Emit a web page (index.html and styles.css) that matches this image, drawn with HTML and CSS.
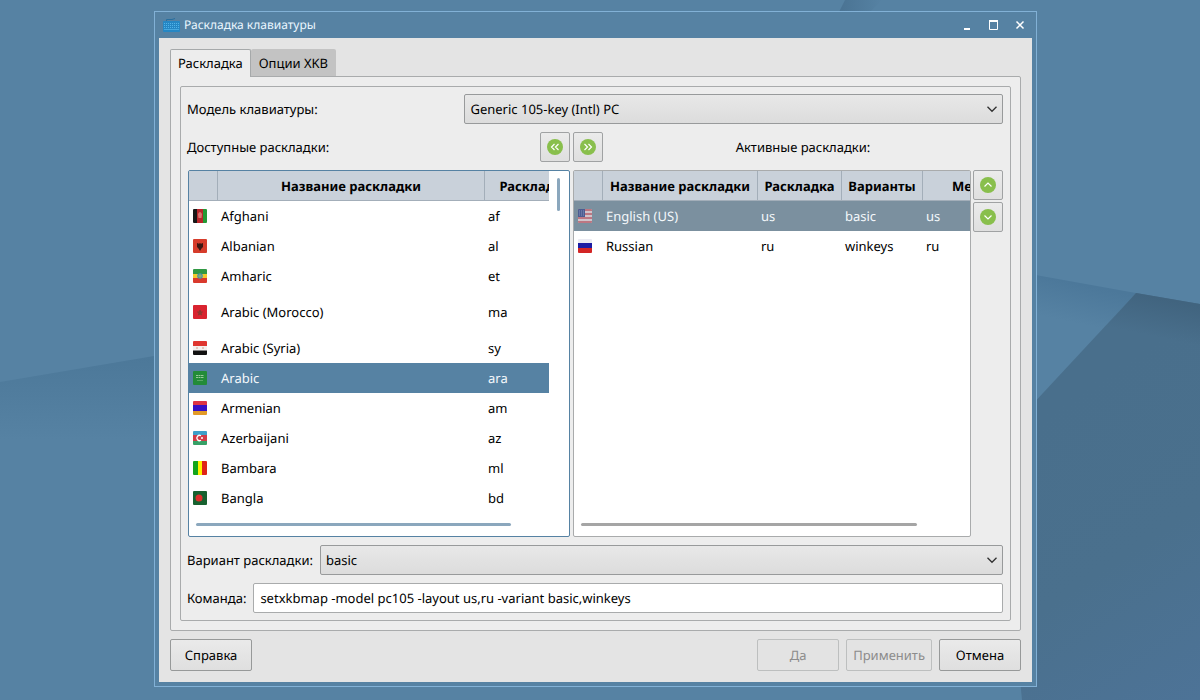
FILE: index.html
```html
<!DOCTYPE html>
<html lang="ru">
<head>
<meta charset="utf-8">
<title>Раскладка клавиатуры</title>
<link rel="stylesheet" href="styles.css">
</head>
<body>
<svg class="wallpaper" viewBox="0 0 1200 700" preserveAspectRatio="none" aria-hidden="true">
  <defs>
    <linearGradient id="shadeLeft" x1="0" y1="0" x2="0" y2="1"><stop offset="0" stop-color="#4c7899"/><stop offset="1" stop-color="#5682a3"/></linearGradient>
    <linearGradient id="shadeRight" gradientUnits="userSpaceOnUse" x1="1060" y1="280" x2="1052" y2="318"><stop offset="0" stop-color="#4c789a"/><stop offset="1" stop-color="#5682a3"/></linearGradient>
    <linearGradient id="facet" gradientUnits="userSpaceOnUse" x1="1020" y1="430" x2="1200" y2="700"><stop offset="0" stop-color="#496f8c"/><stop offset="0.5" stop-color="#4a708d"/><stop offset="1" stop-color="#4d7397"/></linearGradient>
    <linearGradient id="facetTop" gradientUnits="userSpaceOnUse" x1="1160" y1="298" x2="1152" y2="336"><stop offset="0" stop-color="#41647f"/><stop offset="1" stop-color="#41647f" stop-opacity="0"/></linearGradient>
    <linearGradient id="topShade" x1="0" y1="0" x2="1" y2="0"><stop offset="0" stop-color="#4a7393"/><stop offset="1" stop-color="#5682a3"/></linearGradient>
  </defs>
  <rect width="1200" height="700" fill="#5682a3"/>
  <path d="M0 382L154 356V440H0z" fill="url(#shadeLeft)"/>
  <path d="M845 0H882L870 12H839z" fill="url(#topShade)"/>
  <path d="M1030 274L1136 293L1030 408z" fill="url(#shadeRight)"/>
  <path d="M1136 293L1200 304V700H1022L1020 680L1030 407z" fill="url(#facet)"/>
  <path d="M1136 293L1200 304V345L1100 333z" fill="url(#facetTop)"/>
</svg>
<svg class="symbols" aria-hidden="true">
  <symbol id="chevron" viewBox="0 0 12 12"><path d="M1.5 3.8L6 8.3L10.500 3.800" fill="none" stroke="#303030" stroke-width="1.300"/></symbol>
</svg>

<main class="window">
  <header class="titlebar">
    <svg class="app-icon" viewBox="0 0 17 14" aria-hidden="true">
      <path d="M3.500 3.500V1.500H9L12 .5" fill="none" stroke="#286f9f"/>
      <rect x="0" y="3" width="17" height="11" rx="1" fill="#2587c4"/>
      <path d="M1 5.500H16M1 7.500H16M1 9.500H16" stroke="#51b3e8" stroke-dasharray="1 1"/>
      <path d="M1 11.500H16" stroke="#45a8df"/>
    </svg>
    <h1 class="title">Раскладка клавиатуры</h1>
    <div class="controls">
      <button class="control" type="button" aria-label="Свернуть"><svg viewBox="0 0 10 10"><path d="M1 9H7" stroke="#fff" stroke-width="2"/></svg></button>
      <button class="control" type="button" aria-label="Развернуть"><svg viewBox="0 0 10 10"><path d="M.5 1.500H8.500V9.500H.5z" fill="none" stroke="#fff" stroke-width="1"/><path d="M0 1H9" stroke="#fff" stroke-width="2"/></svg></button>
      <button class="control" type="button" aria-label="Закрыть"><svg viewBox="0 0 10 10"><path d="M1.500 1.500L8.500 8.500M8.500 1.500L1.500 8.500" stroke="#fff" stroke-width="1.500"/></svg></button>
    </div>
  </header>

  <div class="content">
    <div class="tabs" role="tablist">
      <button class="tab tab-active" type="button" role="tab" aria-selected="true">Раскладка</button>
      <button class="tab" type="button" role="tab" aria-selected="false">Опции XKB</button>
    </div>
    <section class="panel">
      <div class="group">
        <div class="model-row">
          <label for="model">Модель клавиатуры:</label>
          <div class="combo">
            <select id="model"><option>Generic 105-key (Intl) PC</option></select>
            <svg class="combo-arrow"><use href="#chevron"/></svg>
          </div>
        </div>

        <div class="lists">
          <div class="list-head">
            <span>Доступные раскладки:</span>
            <button class="icon-button" type="button" aria-label="Убрать раскладку"><svg viewBox="0 0 16 16"><circle cx="8" cy="8" r="8" fill="#89bf4c"/><path d="M7.500 5L4.500 8L7.500 11M11.500 5L8.500 8L11.500 11" fill="none" stroke="#fff" stroke-width="1.200"/></svg></button>
          </div>
          <div class="list-head">
            <button class="icon-button" type="button" aria-label="Добавить раскладку"><svg viewBox="0 0 16 16"><circle cx="8" cy="8" r="8" fill="#89bf4c"/><path d="M4.500 5L7.500 8L4.500 11M8.500 5L11.500 8L8.500 11" fill="none" stroke="#fff" stroke-width="1.200"/></svg></button>
            <span class="centered">Активные раскладки:</span>
          </div>

          <div class="view view-focused">
            <div class="viewport">
              <table class="table available">
                <colgroup><col class="c-flag"><col class="c-name-wide"><col class="c-code-wide"></colgroup>
                <thead><tr><th></th><th>Название раскладки</th><th>Раскладка</th></tr></thead>
                <tbody>
                  <tr><td><svg class="flag" viewBox="0 0 14 14"><path fill="#161616" d="M0 0h5v14H0z"/><path fill="#b9262b" d="M4 0h6v14H4z"/><path fill="#249a35" d="M10 0h4v14h-4z"/><path d="M5 5Q7 1 9 5L8.500 9H5.500z" fill="#d9766f"/></svg></td><td>Afghani</td><td>af</td></tr>
                  <tr><td><svg class="flag" viewBox="0 0 14 14"><path fill="#d63c2b" d="M0 0h14v14H0z"/><path fill="#3b1713" d="M4 4l2 .7L7 4l1 .7L10 4v4L8.500 9.500 7 12 5.500 9.500 4 8z"/></svg></td><td>Albanian</td><td>al</td></tr>
                  <tr><td><svg class="flag" viewBox="0 0 14 14"><path fill="#319944" d="M0 0h14v5H0z"/><path fill="#f2c92d" d="M0 5h14v4H0z"/><path fill="#d93a2d" d="M0 9h14v5H0z"/><circle cx="7" cy="7" r="2.800" fill="#458eae"/><path d="M7 4.800v4.400M5 7h4" stroke="#9bb65b"/></svg></td><td>Amharic</td><td>et</td></tr>
                  <tr class="tall"><td><svg class="flag" viewBox="0 0 14 14"><path fill="#d9232f" d="M0 0h14v14H0z"/><path d="M7 5l1.500 5-4-3h5l-4 3z" fill="none" stroke="#8b3930"/></svg></td><td>Arabic (Morocco)</td><td>ma</td></tr>
                  <tr><td><svg class="flag" viewBox="0 0 14 14"><path fill="#df352f" d="M0 0h14v5H0z"/><path fill="#f3f0ee" d="M0 5h14v4.500H0z"/><path fill="#111" d="M0 9.500h14V14H0z"/><path d="M3 7h2M9 7h2" stroke="#d99a87"/></svg></td><td>Arabic (Syria)</td><td>sy</td></tr>
                  <tr class="selected"><td><svg class="flag" viewBox="0 0 14 14"><path fill="#238b38" d="M0 0h14v14H0z"/><path d="M3 4.500h8M3 6.500h8" stroke="#99c99a" stroke-dasharray="2 .5"/><path d="M4 9.500h6" stroke="#5aa765"/></svg></td><td>Arabic</td><td>ara</td></tr>
                  <tr><td><svg class="flag" viewBox="0 0 14 14"><path fill="#dd3343" d="M0 0h14v5H0z"/><path fill="#3510c4" d="M0 4h14v6H0z"/><path fill="#e29a27" d="M0 10h14v4H0z"/></svg></td><td>Armenian</td><td>am</td></tr>
                  <tr><td><svg class="flag" viewBox="0 0 14 14"><path fill="#3d9fc9" d="M0 0h14v5H0z"/><path fill="#d13c48" d="M0 4h14v6H0z"/><path fill="#36a066" d="M0 10h14v4H0z"/><path d="M8 4.700a2.700 2.700 0 1 0 0 4.600" fill="none" stroke="#fff" stroke-width="1.300"/><circle cx="9" cy="7" r="1" fill="#fff"/></svg></td><td>Azerbaijani</td><td>az</td></tr>
                  <tr><td><svg class="flag" viewBox="0 0 14 14"><path fill="#14a51b" d="M0 0h5v14H0z"/><path fill="#fff100" d="M5 0h4v14H5z"/><path fill="#df2418" d="M9 0h5v14H9z"/></svg></td><td>Bambara</td><td>ml</td></tr>
                  <tr><td><svg class="flag" viewBox="0 0 14 14"><path fill="#17612f" d="M0 0h14v14H0z"/><circle cx="6" cy="7" r="3.500" fill="#df2d2b"/></svg></td><td>Bangla</td><td>bd</td></tr>
                </tbody>
              </table>
            </div>
            <div class="vtrack"><div class="vthumb"></div></div>
            <div class="htrack"><div class="hthumb"></div></div>
          </div>

          <div class="active-list">
            <div class="view">
              <div class="viewport viewport-wide">
                <table class="table active">
                  <colgroup><col class="c-flag"><col class="c-name"><col class="c-code"><col class="c-variant"><col class="c-label"></colgroup>
                  <thead><tr><th></th><th>Название раскладки</th><th>Раскладка</th><th>Варианты</th><th>Метка</th></tr></thead>
                  <tbody>
                    <tr class="selected"><td><svg class="flag" viewBox="0 0 14 14"><path fill="#d1c4cb" d="M0 0h14v14H0z"/><path d="M0 1h14M0 5h14M0 9h14M0 13h14" stroke="#b75e6b" stroke-width="1.600"/><path fill="#4c5d92" d="M0 0h7v8H0z"/><path d="M1 2h5M1 4h5M1 6h5" stroke="#8492b8" stroke-dasharray="1 1"/></svg></td><td>English (US)</td><td>us</td><td>basic</td><td>us</td></tr>
                    <tr><td><svg class="flag" viewBox="0 0 14 14"><path fill="#ebebf3" d="M0 0h14v5H0z"/><path fill="#1c1ca4" d="M0 4h14v6H0z"/><path fill="#d32525" d="M0 9h14v5H0z"/></svg></td><td>Russian</td><td>ru</td><td>winkeys</td><td>ru</td></tr>
                  </tbody>
                </table>
              </div>
              <div class="htrack"><div class="hthumb hthumb-wide"></div></div>
            </div>
            <div class="order">
              <button class="icon-button" type="button" aria-label="Выше"><svg viewBox="0 0 16 16"><circle cx="8" cy="8" r="8" fill="#89bf4c"/><path d="M4.500 9.500L8 6L11.500 9.500" fill="none" stroke="#fff" stroke-width="1.200"/></svg></button>
              <button class="icon-button" type="button" aria-label="Ниже"><svg viewBox="0 0 16 16"><circle cx="8" cy="8" r="8" fill="#89bf4c"/><path d="M4.500 6.500L8 10L11.500 6.500" fill="none" stroke="#fff" stroke-width="1.200"/></svg></button>
            </div>
          </div>
        </div>

        <div class="field">
          <label for="variant">Вариант раскладки:</label>
          <div class="combo">
            <select id="variant"><option>basic</option></select>
            <svg class="combo-arrow"><use href="#chevron"/></svg>
          </div>
        </div>
        <div class="field">
          <label for="command">Команда:</label>
          <input id="command" class="command" type="text" value="setxkbmap -model pc105 -layout us,ru -variant basic,winkeys">
        </div>
      </div>
    </section>
    <footer class="actions">
      <button class="button button-help" type="button">Справка</button>
      <button class="button" type="button" disabled>Да</button>
      <button class="button" type="button" disabled>Применить</button>
      <button class="button" type="button">Отмена</button>
    </footer>
  </div>
</main>
</body>
</html>
```
FILE: styles.css
```css
* { box-sizing: border-box; }

body {
  display: flex;
  min-height: 100vh;
  margin: 0;
  padding: 11px 163px 13px 154px;
  background: #5682a3;
  color: #000;
  font: 13px/18px "Noto Sans", sans-serif;
  text-rendering: geometricPrecision;
}

button, select, input { font: inherit; color: inherit; margin: 0; text-rendering: inherit; }

.wallpaper { position: fixed; inset: 0; z-index: -1; width: 100%; height: 100%; }
.symbols { position: absolute; width: 0; height: 0; }

.window {
  display: flex;
  flex: 1;
  flex-direction: column;
  min-width: 0;
  padding: 0 4px 4px;
  border: 1px solid #82b1d6;
  background: #5682a3;
}

.titlebar { display: flex; align-items: center; gap: 4px; height: 26px; padding: 0 7px 0 4px; color: #eaf6ff; }
.app-icon { width: 17px; height: 14px; }
.title { flex: 1; margin: 0; font-size: 12px; font-weight: 400; }
.controls { display: flex; gap: 16px; }
.control { display: flex; width: 10px; height: 10px; padding: 0; border: 0; background: none; }
.control svg { width: 10px; height: 10px; }

.content { display: flex; flex: 1; flex-direction: column; padding: 11px 11px 11px 11px; background: #e4e4e4; }

.tabs { display: flex; align-items: flex-end; }
.tab { height: 27px; padding: 0 8px; border: 0; border-radius: 2px 2px 0 0; background: #c3c3c3; }
.tab-active {
  height: 28px;
  margin-bottom: -1px;
  padding: 0 7px 1px;
  border: 1px solid #a6a9aa;
  border-bottom: 0;
  background: #ededed;
  z-index: 1;
}

.panel { display: flex; flex: 1; padding: 9px; border: 1px solid #a9abac; border-radius: 0 2px 2px 2px; background: #ededed; }
.group {
  display: flex;
  flex: 1;
  flex-direction: column;
  gap: 8px;
  min-width: 0;
  padding: 7px 7px 7px 6px;
  border: 1px solid #a9abac;
  border-radius: 2px;
}

.model-row { display: grid; grid-template-columns: 34fr 66fr; align-items: center; }
.field { display: flex; align-items: center; gap: 7px; }
.field .combo { flex: 1; }

.combo { display: grid; align-items: center; }
.combo select, .combo-arrow { grid-area: 1 / 1; }
.combo select {
  width: 100%;
  height: 30px;
  padding: 0 24px 0 5px;
  border: 1px solid #989a9b;
  border-radius: 2px;
  appearance: none;
  background: linear-gradient(#e8e8e8, #dcdcdc);
}
.combo-arrow { justify-self: end; width: 12px; height: 12px; margin-right: 5px; pointer-events: none; }

.command { flex: 1; min-width: 0; height: 30px; padding: 0 6px; border: 1px solid #a9abac; border-radius: 2px; background: #fff; }

.lists { display: grid; flex: 1; grid-template-columns: 383fr 430fr; grid-template-rows: auto 1fr; gap: 8px 3px; }
.list-head { display: flex; align-items: center; justify-content: space-between; }
.centered { flex: 1; text-align: center; }

.icon-button {
  display: flex;
  align-items: center;
  justify-content: center;
  width: 30px;
  height: 30px;
  padding: 0;
  border: 1px solid #a0a2a3;
  border-radius: 2px;
  background: linear-gradient(#ebebeb, #dfdfdf);
}
.icon-button svg { width: 16px; height: 16px; }

.view {
  display: grid;
  flex: 1;
  grid-template-columns: minmax(0, 1fr) 20px;
  grid-template-rows: minmax(0, 1fr) 23px;
  min-width: 0;
  border: 1px solid #a9abac;
  border-radius: 2px;
  background: #fff;
}
.view-focused { margin-left: 1px; border-color: #5682a3; }
.viewport { overflow: hidden; }
.viewport-wide { grid-column: 1 / -1; }
.vtrack { padding: 7px 9px 0 8px; }
.vthumb { height: 33px; border-radius: 2px; background: #8ba7bd; }
.htrack { grid-column: 1 / -1; padding: 10px 7px; }
.hthumb { width: 86%; height: 3px; border-radius: 2px; background: #8ba7bd; }
.hthumb-wide { width: 88%; background: #a5a5a5; }

.active-list { display: flex; gap: 2px; }
.order { display: flex; flex-direction: column; gap: 2px; }

.table { table-layout: fixed; border-collapse: separate; border-spacing: 0; }
.available { width: 396px; }
.active { width: 450px; }
.c-flag { width: 29px; }
.c-name-wide { width: 267px; }
.c-code-wide { width: 100px; }
.c-name { width: 155px; }
.c-code { width: 84px; }
.c-variant { width: 81px; }
.c-label { width: 101px; }
.table th {
  height: 30px;
  padding: 0;
  border-right: 1px solid #a3aeb9;
  border-bottom: 1px solid #a3aeb9;
  background: #c9d1da;
  font-weight: 700;
  text-align: center;
  white-space: nowrap;
}
.table td { height: 30px; padding: 0 3px; white-space: nowrap; }
.table td:first-child { padding-left: 4px; }
.table .tall td { height: 42px; }
.selected { background: #5682a3; color: #f4f8fb; }
.active .selected { background: #7b909f; }
.flag { display: block; width: 14px; height: 14px; border-radius: 1px; }

.actions { display: flex; gap: 7px; padding-top: 8px; }
.button {
  min-width: 82px;
  height: 32px;
  padding: 0 6px;
  border: 1px solid #979999;
  border-radius: 2px;
  background: linear-gradient(#eaeaea, #dfdfdf);
}
.button-help { margin-right: auto; }
.button:disabled { border-color: #bdbfbf; background: #e3e3e3; color: #8c8c8c; }
```
